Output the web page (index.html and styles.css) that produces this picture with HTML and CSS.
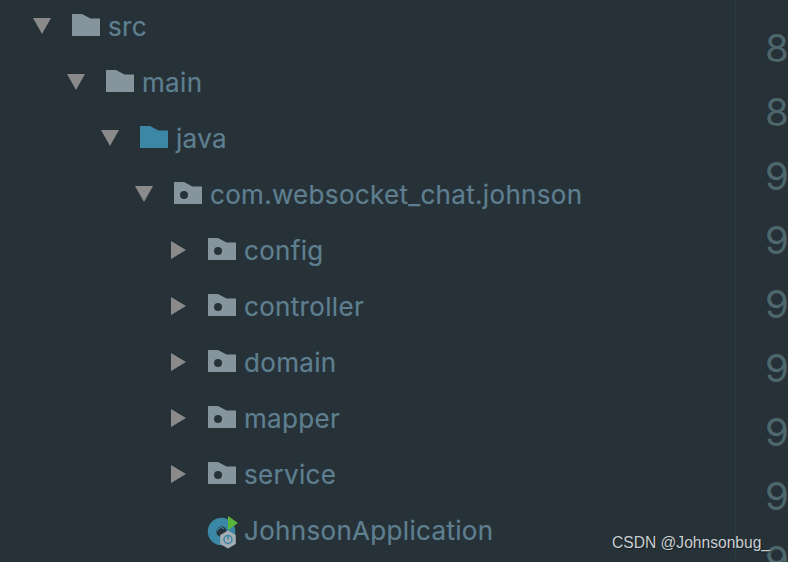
FILE: index.html
```html
<!DOCTYPE html>
<html lang="en">
<head>
<meta charset="utf-8">
<title>Project tree</title>
<link rel="stylesheet" href="styles.css">
</head>
<body>
<svg class="defs" width="0" height="0" aria-hidden="true">
  <symbol id="folder" viewBox="0 0 28 22"><path d="M0 0H10L18.500 4.500H28V22H0Z"/></symbol>
  <symbol id="pkg" viewBox="0 0 28 22"><path fill-rule="evenodd" d="M0 0H10L18.500 4.500H28V22H0ZM10 9a4 4 0 1 0 0 8a4 4 0 1 0 0-8Z"/></symbol>
  <symbol id="down" viewBox="0 0 18 16"><path d="M0 0H18L9 16Z"/></symbol>
  <symbol id="right" viewBox="0 0 16 18"><path d="M0 0L15 9L0 18Z"/></symbol>
</svg>
<main class="editor">
  <ul class="tree">
    <li class="row lvl0"><svg class="arrow-d"><use href="#down"/></svg><svg class="ico"><use href="#folder"/></svg><span>src</span></li>
    <li class="row lvl1"><svg class="arrow-d"><use href="#down"/></svg><svg class="ico"><use href="#folder"/></svg><span>main</span></li>
    <li class="row lvl2"><svg class="arrow-d"><use href="#down"/></svg><svg class="ico blue"><use href="#folder"/></svg><span>java</span></li>
    <li class="row lvl3"><svg class="arrow-d"><use href="#down"/></svg><svg class="ico"><use href="#pkg"/></svg><span>com.websocket_chat.johnson</span></li>
    <li class="row lvl4"><svg class="arrow-r"><use href="#right"/></svg><svg class="ico"><use href="#pkg"/></svg><span>config</span></li>
    <li class="row lvl4"><svg class="arrow-r"><use href="#right"/></svg><svg class="ico"><use href="#pkg"/></svg><span>controller</span></li>
    <li class="row lvl4"><svg class="arrow-r"><use href="#right"/></svg><svg class="ico"><use href="#pkg"/></svg><span>domain</span></li>
    <li class="row lvl4"><svg class="arrow-r"><use href="#right"/></svg><svg class="ico"><use href="#pkg"/></svg><span>mapper</span></li>
    <li class="row lvl4"><svg class="arrow-r"><use href="#right"/></svg><svg class="ico"><use href="#pkg"/></svg><span>service</span></li>
    <li class="row lvl4"><span class="arrow-none"></span>
      <svg class="ico app" viewBox="0 0 30 32">
        <circle cx="13.500" cy="15.500" r="9.500" fill="none" stroke="#3a87a6" stroke-width="8.500"/>
        <path d="M9 15.500a4 4 0 0 1 7-2.500" fill="none" stroke="#3a87a6" stroke-width="1.200"/>
        <path d="M20 0L30 7L20 14Z" fill="#5bb53a"/>
        <path d="M20 14.500L27.800 19V28L20 32.500L12.200 28V19Z" fill="#a3aeb4"/>
        <circle cx="20" cy="23.500" r="4" fill="none" stroke="#3a87a6" stroke-width="1.500"/>
        <path d="M20 19.500V23.500" stroke="#3a87a6" stroke-width="1.500"/>
      </svg><span>JohnsonApplication</span></li>
  </ul>
  <div class="divider"></div>
  <div class="gutter"><span>8</span><span>8</span><span>9</span><span>9</span><span>9</span><span>9</span><span>9</span><span>9</span><span>9</span></div>
</main>
<div class="mark">CSDN @Johnsonbug_</div>
</body>
</html>
```
FILE: styles.css
```css
* { box-sizing: border-box; }
html, body { margin: 0; height: 100%; }
body { width: 788px; height: 562px; overflow: hidden; background: #263238; font-family: Inter, "Liberation Sans", sans-serif; }
.defs { position: absolute; }
.editor { display: flex; height: 562px; overflow: hidden; }
.tree { list-style: none; margin: 0; padding: 0; width: 735px; flex: none; }
.row { display: flex; align-items: center; height: 56px; color: #5f7f90; font-size: 26px; letter-spacing: 0.32px; -webkit-text-stroke: 0.2px #5f7f90; }
.lvl0 { padding-left: 33px; }
.lvl1 { padding-left: 67px; }
.lvl2 { padding-left: 101px; }
.lvl3 { padding-left: 135px; }
.lvl4 { padding-left: 171px; }
.row span:not(.arrow-none) { margin-left: 8px; position: relative; top: -2px; }
.arrow-d { width: 18px; height: 16px; fill: #8a8a8a; margin-right: 21px; position: relative; top: -2px; }
.arrow-r { width: 16px; height: 18px; fill: #8a8a8a; margin-right: 21px; position: relative; top: -2px; }
.arrow-none { width: 37px; flex: none; }
.ico { width: 28px; height: 22px; fill: #86949e; flex: none; position: relative; top: -3px; }
.ico.blue { fill: #3a87a6; }
.ico.app { width: 30px; height: 32px; top: 0; margin-right: -2px; overflow: visible; }
.divider { width: 1px; flex: none; background: #2a3a44; }
.gutter { flex: 1; display: flex; flex-direction: column; padding: 16px 0 0 29px; color: #4d666c; font-size: 38.500px; line-height: 64px; }
.gutter span { display: block; height: 64px; flex: none; }
.mark { position: absolute; right: 18px; bottom: 10px; color: #c9ced1; font: 15.600px "Liberation Sans", sans-serif; text-shadow: 1px 1px 1px #1a1f24; }
```
